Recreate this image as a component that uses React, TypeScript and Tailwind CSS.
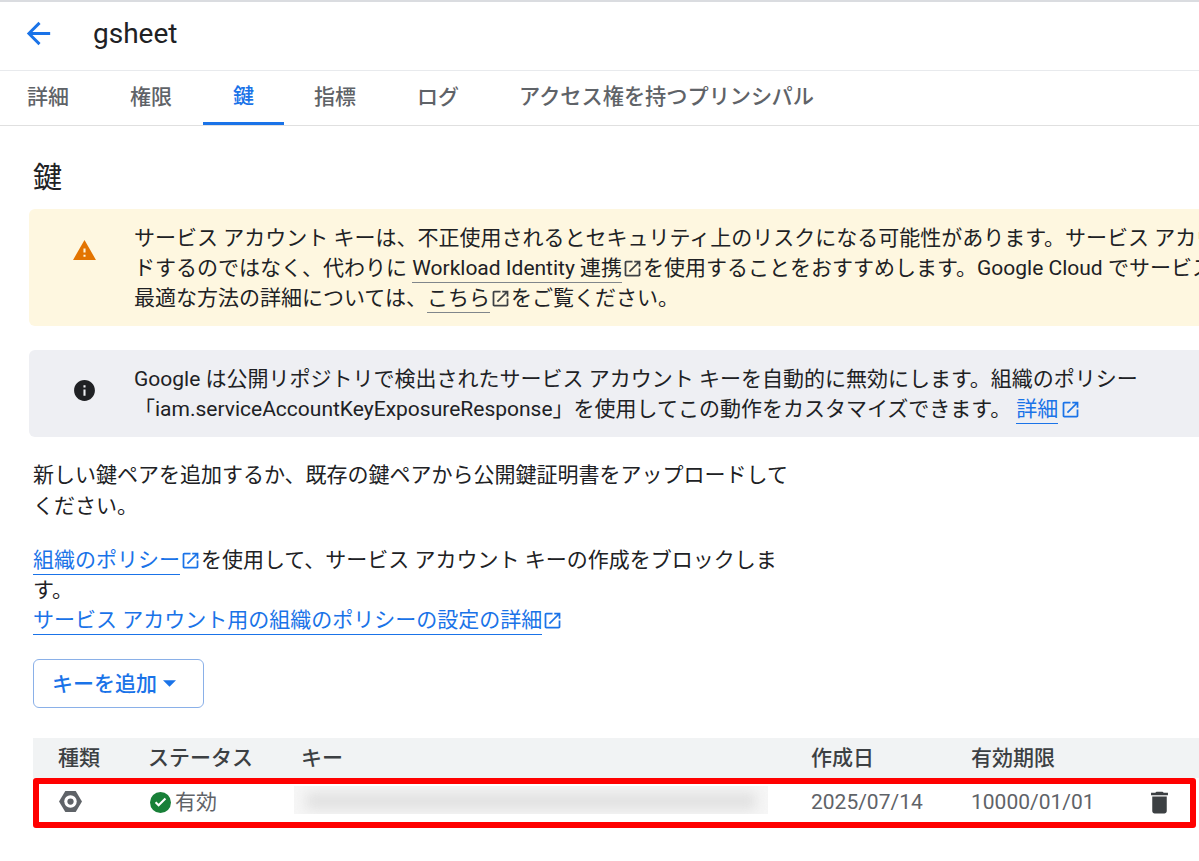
const ExtIcon = ({ className = "" }: { className?: string }) => (
  <svg viewBox="0 0 24 24" fill="currentColor" className={`inline-block w-[21px] h-[21px] align-[-4px] ${className}`}>
    <path d="M19 19H5V5h7V3H5c-1.11 0-2 .9-2 2v14c0 1.1.89 2 2 2h14c1.1 0 2-.9 2-2v-7h-2v7zM14 3v2h3.59l-9.83 9.83 1.41 1.41L19 6.41V10h2V3h-7z" />
  </svg>
);

const tabs = [
  { label: "詳細", cls: "pl-[27px] pr-[30px] pb-[2px]" },
  { label: "権限", cls: "ml-px px-[30px] pb-[2px]" },
  { label: "鍵", cls: "ml-px px-[30px] pb-[1px] text-[#1a73e8] border-b-[3px] border-[#1a73e8]" },
  { label: "指標", cls: "px-[30px] pb-[2px]" },
  { label: "ログ", cls: "ml-px px-[30px] pb-[2px]" },
  { label: "アクセス権を持つプリンシパル", cls: "px-[30px] pb-[2px] text-[21.2px]" },
];

export default function App() {
  return (
    <div className="w-[1199px] h-[861px] overflow-hidden bg-white text-[#202124] text-[21px] leading-[30px] font-['Roboto','Noto_Sans_CJK_JP',sans-serif]">
      <div className="h-[71px] border-t-2 border-b border-t-[#dadce0] border-b-[#e8eaed] flex items-center pl-[21px]">
        <svg viewBox="0 0 24 24" fill="#1a73e8" className="w-[35px] h-[35px] mb-[5px]">
          <path d="M20 11H7.83l5.59-5.59L12 4l-8 8 8 8 1.41-1.41L7.83 13H20v-2z" />
        </svg>
        <div className="ml-[37px] text-[28px] leading-[34px] mb-[5px]">gsheet</div>
      </div>

      <div className="h-[55px] border-b border-[#e0e0e0] flex text-[#5f6368] font-medium">
        {tabs.map((t) => (
          <div key={t.label} className={`h-[54px] flex items-center ${t.cls}`}>
            {t.label}
          </div>
        ))}
      </div>

      <div className="pl-[33px]">
        <h1 className="text-[29px] leading-[38px] mt-[33px] font-normal">鍵</h1>

        <div className="mt-[12px] -ml-[4px] w-[1300px] h-[117px] bg-[#fef7e0] rounded-[6px] flex pl-[43px] pt-[14px]">
          <svg viewBox="0 0 24 24" fill="#e37400" className="w-[25px] h-[25px] mt-[15px] shrink-0">
            <path d="M1 21h22L12 2 1 21zm12-3h-2v-2h2v2zm0-4h-2v-4h2v4z" />
          </svg>
          <div className="ml-[37px] whitespace-nowrap">
            <div>サービス アカウント キーは、不正使用されるとセキュリティ上のリスクになる可能性があります。サービス アカウント</div>
            <div>
              ドするのではなく、代わりに <span className="border-b border-[#80868b] pb-[2px]">Workload Identity 連携</span>
              <ExtIcon className="text-[#3c4043]" />を使用することをおすすめします。Google Cloud でサービス アカウント
            </div>
            <div>
              最適な方法の詳細については、<span className="border-b border-[#80868b] pb-[2px]">こちら</span>
              <ExtIcon className="text-[#3c4043]" />をご覧ください。
            </div>
          </div>
        </div>

        <div className="mt-[24px] -ml-[4px] w-[1300px] h-[87px] bg-[#eeeff3] rounded-[6px] flex pl-[43px] pt-[14px]">
          <svg viewBox="0 0 24 24" fill="#202124" className="w-[25px] h-[25px] mt-[14px] shrink-0">
            <path d="M12 2C6.48 2 2 6.48 2 12s4.48 10 10 10 10-4.48 10-10S17.52 2 12 2zm1 15h-2v-6h2v6zm0-8h-2V7h2v2z" />
          </svg>
          <div className="ml-[37px] whitespace-nowrap">
            <div>Google は公開リポジトリで検出されたサービス アカウント キーを自動的に無効にします。組織のポリシー</div>
            <div>
              「iam.serviceAccountKeyExposureResponse」を使用してこの動作をカスタマイズできます。
              <span className="ml-[5px] text-[#1a73e8] border-b border-[#1a73e8] pb-[2px]">詳細</span>
              <ExtIcon className="text-[#1a73e8] ml-[2px]" />
            </div>
          </div>
        </div>

        <p className="mt-[23px] w-[770px] leading-[31px]">新しい鍵ペアを追加するか、既存の鍵ペアから公開鍵証明書をアップロードしてください。</p>

        <div className="mt-[23px] w-[770px]">
          <span className="text-[#1a73e8] border-b border-[#1a73e8] pb-[2px]">組織のポリシー</span>
          <ExtIcon className="text-[#1a73e8]" />を使用して、サービス アカウント キーの作成をブロックします。
          <br />
          <span className="text-[#1a73e8] border-b border-[#1a73e8] pb-[2px]">サービス アカウント用の組織のポリシーの設定の詳細</span>
          <ExtIcon className="text-[#1a73e8]" />
        </div>

        <button className="mt-[24px] w-[171px] h-[49px] border border-[#8ab0e8] rounded-[6px] text-[#1a73e8] font-medium flex items-center pl-[18px]">
          キーを追加
          <svg viewBox="0 0 10 5" fill="#1a73e8" className="ml-[6px] w-[13px] h-[7px]">
            <path d="M0 0l5 5 5-5z" />
          </svg>
        </button>

        <div className="mt-[30px] h-[40px] bg-[#f1f3f4] grid grid-cols-[90px_153px_510px_160px_1fr] items-center pl-[25px] font-medium text-[#3c4043] leading-[26px]">
          <div>種類</div>
          <div>ステータス</div>
          <div>キー</div>
          <div>作成日</div>
          <div>有効期限</div>
        </div>

        <div className="mr-[3px] h-[50px] border-[6px] border-[#ff0000] rounded-[3px] grid grid-cols-[90px_153px_510px_160px_1fr] items-center pl-[19px] pb-[2px] text-[#5f6368]">
          <svg viewBox="0 0 24 24" className="w-[25px] h-[25px] mb-[2px]">
            <path d="M7 2h10l6 10-6 10H7L1 12z" fill="#5f6368" />
            <circle cx="12" cy="12" r="6" fill="#ffffff" />
            <circle cx="12" cy="12" r="3" fill="#5f6368" />
          </svg>
          <div className="flex items-center">
            <svg viewBox="0 0 20 20" className="w-[21px] h-[21px] ml-[2px] shrink-0">
              <circle cx="10" cy="10" r="10" fill="#188038" />
              <path d="M4.6 10.4l3.6 3.6 7.2-7.2-1.4-1.4-5.8 5.8-2.2-2.2z" fill="#ffffff" />
            </svg>
            <span className="ml-[4px]">有効</span>
          </div>
          <div className="h-[28px] w-[474px] -ml-[7px] mb-[4px] bg-[#f6f6f6] overflow-hidden">
            <div className="h-[18px] w-[450px] mx-[12px] mt-[6px] bg-[#e2e2e2] blur-[6px]" />
          </div>
          <div>2025/07/14</div>
          <div className="flex items-center justify-between pr-[16px]">
            <span>10000/01/01</span>
            <svg viewBox="0 0 24 24" fill="#3c4043" className="w-[29px] h-[29px]">
              <path d="M6 19c0 1.1.9 2 2 2h8c1.1 0 2-.9 2-2V7H6v12zM19 4h-3.5l-1-1h-5l-1 1H5v2h14V4z" />
            </svg>
          </div>
        </div>
      </div>
    </div>
  );
}
